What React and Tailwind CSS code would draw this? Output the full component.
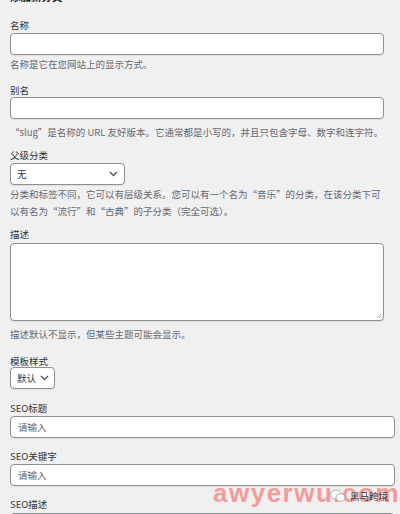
import React from "react";

const font = { fontFamily: '"Noto Sans CJK SC", "Noto Sans", sans-serif' };

function Chevron({ className }) {
  return (
    <svg className={className} width="9" height="6" viewBox="0 0 9 6" fill="none">
      <path d="M1 1l3.5 3.5L8 1" stroke="#50575e" strokeWidth="1.4" />
    </svg>
  );
}

export default function App() {
  const label = "block text-[9.5px] leading-[14px] text-[#2c3338] h-[14px]";
  const help = "text-[9.5px] leading-[14px] text-[#646970]";
  const input =
    "block h-[22px] rounded-[4px] border border-[#8c8f94] bg-white shadow-[0_1px_1px_rgba(0,0,0,0.08)]";
  return (
    <div
      className="relative w-[400px] h-[514px] overflow-hidden bg-[#f0f0f1] px-[10px]"
      style={font}
    >
      <div className="mt-[-12px] h-[18px] text-[10.5px] leading-[18px] font-bold text-[#1d2327]">
        添加新分类
      </div>

      <div className={`${label} mt-[12px]`}>名称</div>
      <div className={`${input} mt-[1px] w-[374px]`} />
      <div className={`${help} mt-[2px]`}>名称是它在您网站上的显示方式。</div>

      <div className={`${label} mt-[12px]`}>别名</div>
      <div className={`${input} mt-0 w-[374px]`} />
      <div className={`${help} mt-[6px]`}>
        “slug”是名称的 URL 友好版本。它通常都是小写的，并且只包含字母、数字和连字符。
      </div>

      <div className={`${label} mt-[9px]`}>父级分类</div>
      <div className={`${input} mt-[1px] h-[21px] w-[115px] flex items-center justify-between pl-[6px] pr-[6px]`}>
        <span className="text-[9.5px] text-[#2c3338]">无</span>
        <Chevron />
      </div>
      <div className="mt-[1px] text-[9.5px] leading-[17px] text-[#646970] w-[374px]">
        分类和标签不同，它可以有层级关系。您可以有一个名为“音乐”的分类，在该分类下可以有名为“流行”和“古典”的子分类（完全可选）。
      </div>

      <div className={`${label} mt-[7px]`}>描述</div>
      <div className={`${input} relative mt-[2px] h-[78px] w-[374px]`}>
        <svg className="absolute right-[1px] bottom-[1px]" width="6" height="6" viewBox="0 0 6 6">
          <path d="M5 1L1 5M5 3.5L3.5 5" stroke="#8c8f94" strokeWidth="0.8" />
        </svg>
      </div>
      <div className={`${help} mt-[6px]`}>描述默认不显示，但某些主题可能会显示。</div>

      <div className={`${label} mt-[13px]`}>模板样式</div>
      <div className={`${input} mt-[-1px] w-[45px] flex items-center justify-between pl-[6px] pr-[5px]`}>
        <span className="text-[9.5px] text-[#2c3338]">默认</span>
        <Chevron />
      </div>

      <div className={`${label} mt-[12px]`}>SEO标题</div>
      <div className={`${input} mt-[1px] w-[385px] flex items-center pl-[7px]`}>
        <span className="text-[9.5px] text-[#646970]">请输入</span>
      </div>

      <div className={`${label} mt-[11px]`}>SEO关键字</div>
      <div className={`${input} mt-[1px] w-[385px] flex items-center pl-[7px]`}>
        <span className="text-[9.5px] text-[#646970]">请输入</span>
      </div>

      <div className={`${label} mt-[11px]`}>SEO描述</div>
      <div className={`${input} mt-[2px] w-[385px]`} />

      <div className="absolute left-[213px] top-[480px]">
        <span
          className="text-[26px] leading-[26px] font-bold tracking-[1.5px] text-[#f29b9b]"
          style={{ fontFamily: '"Liberation Sans", sans-serif' }}
        >
          awyerwu.com
        </span>
      </div>
      <div className="absolute left-[330px] top-[489px] flex items-center gap-[4px]">
        <svg width="16" height="14" viewBox="0 0 16 14">
          <ellipse cx="6" cy="5.5" rx="5.4" ry="4.6" fill="#fff" stroke="#9a9a9a" strokeWidth="0.8" />
          <ellipse cx="10.5" cy="8.5" rx="4.4" ry="3.7" fill="#fff" stroke="#9a9a9a" strokeWidth="0.8" />
        </svg>
        <span className="text-[9.5px] leading-[12px] text-[#333]">黑马跨境</span>
      </div>
    </div>
  );
}
